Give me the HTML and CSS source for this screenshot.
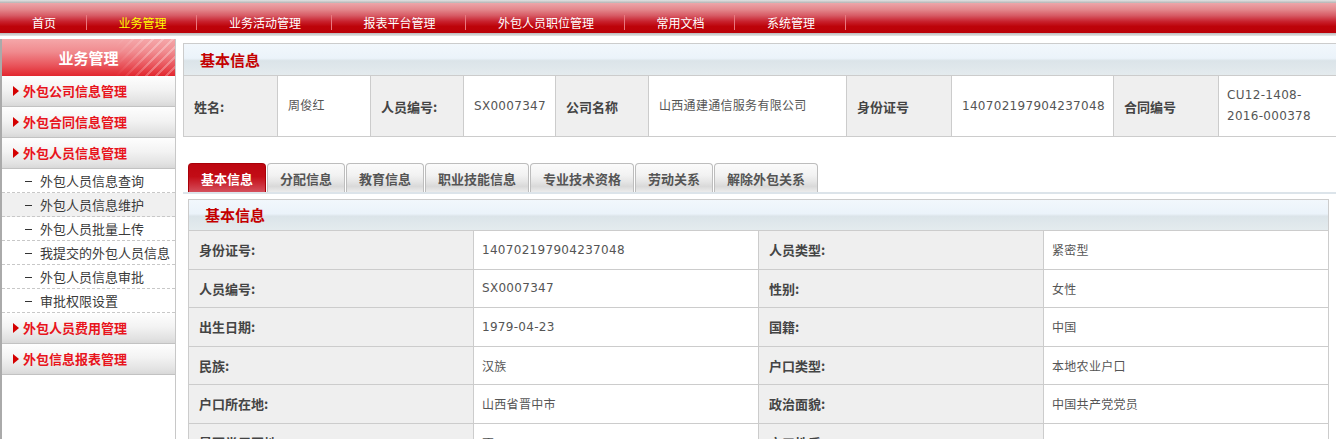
FILE: index.html
```html
<!DOCTYPE html>
<html lang="zh-CN">
<head>
<meta charset="utf-8">
<title>业务管理</title>
<link rel="stylesheet" href="styles.css">
</head>
<body>
<div class="topstrip"></div>
<nav class="nav">
  <a class="nav-item">首页</a>
  <a class="nav-item active">业务管理</a>
  <a class="nav-item">业务活动管理</a>
  <a class="nav-item">报表平台管理</a>
  <a class="nav-item">外包人员职位管理</a>
  <a class="nav-item">常用文档</a>
  <a class="nav-item">系统管理</a>
</nav>
<div class="navshadow"></div>
<div class="layout">
  <aside class="side">
    <div class="side-head">业务管理</div>
    <ul class="menu">
      <li class="menu-item">外包公司信息管理</li>
      <li class="menu-item">外包合同信息管理</li>
      <li class="menu-item">外包人员信息管理</li>
      <li class="sub-item">外包人员信息查询</li>
      <li class="sub-item current">外包人员信息维护</li>
      <li class="sub-item">外包人员批量上传</li>
      <li class="sub-item">我提交的外包人员信息</li>
      <li class="sub-item">外包人员信息审批</li>
      <li class="sub-item">审批权限设置</li>
      <li class="menu-item">外包人员费用管理</li>
      <li class="menu-item">外包信息报表管理</li>
    </ul>
  </aside>
  <main class="main">
    <section class="box box-summary">
      <div class="box-head">基本信息</div>
      <table class="summary">
        <colgroup>
          <col class="s1"><col class="s2"><col class="s3"><col class="s4"><col class="s5">
          <col class="s6"><col class="s7"><col class="s8"><col class="s9"><col class="s10">
        </colgroup>
        <tr>
          <td class="lbl">姓名:</td>
          <td class="val">周俊红</td>
          <td class="lbl">人员编号:</td>
          <td class="val">SX0007347</td>
          <td class="lbl">公司名称</td>
          <td class="val">山西通建通信服务有限公司</td>
          <td class="lbl">身份证号</td>
          <td class="val">140702197904237048</td>
          <td class="lbl">合同编号</td>
          <td class="val last">CU12-1408-2016-000378</td>
        </tr>
      </table>
    </section>

    <div class="tabs">
      <div class="tab active">基本信息</div>
      <div class="tab">分配信息</div>
      <div class="tab">教育信息</div>
      <div class="tab">职业技能信息</div>
      <div class="tab">专业技术资格</div>
      <div class="tab">劳动关系</div>
      <div class="tab">解除外包关系</div>
    </div>

    <section class="box box-detail">
      <div class="box-head">基本信息</div>
      <table class="detail">
        <tr><td class="lbl">身份证号:</td><td class="val">140702197904237048</td><td class="lbl">人员类型:</td><td class="val">紧密型</td></tr>
        <tr><td class="lbl">人员编号:</td><td class="val">SX0007347</td><td class="lbl">性别:</td><td class="val">女性</td></tr>
        <tr><td class="lbl">出生日期:</td><td class="val">1979-04-23</td><td class="lbl">国籍:</td><td class="val">中国</td></tr>
        <tr><td class="lbl">民族:</td><td class="val">汉族</td><td class="lbl">户口类型:</td><td class="val">本地农业户口</td></tr>
        <tr><td class="lbl">户口所在地:</td><td class="val">山西省晋中市</td><td class="lbl">政治面貌:</td><td class="val">中国共产党党员</td></tr>
        <tr><td class="lbl">是否常居同地:</td><td class="val">否</td><td class="lbl">户口性质:</td><td class="val"></td></tr>
      </table>
    </section>
  </main>
</div>
</body>
</html>
```
FILE: styles.css
```css
* { box-sizing: border-box; margin: 0; padding: 0; }

body {
  width: 1336px;
  height: 439px;
  overflow: hidden;
  background: #fff;
  color: #333;
  font-family: "Noto Sans CJK SC", "DejaVu Sans", sans-serif;
  font-size: 13px;
}

.topstrip {
  height: 3px;
  background: linear-gradient(#e2e2e2, #b4b4b4);
}

.nav {
  height: 30px;
  display: flex;
  background: linear-gradient(#eda6a9 0%, #e3878c 22%, #d75a64 42%, #c8202c 62%, #bd0309 78%, #bb0008 100%);
}

.nav-item {
  position: relative;
  padding: 9px 30.5px 0 32px;
  line-height: 21px;
  font-size: 12px;
  color: #fff;
  text-decoration: none;
}

.nav-item::after {
  content: "";
  position: absolute;
  right: 0;
  top: 12px;
  width: 1px;
  height: 15px;
  background: #e8787f;
}

.nav-item.active { color: #ffff00; }

.navshadow {
  height: 3px;
  background: linear-gradient(#b9b9b9, #e6e6e6);
}

.layout {
  display: flex;
  align-items: flex-start;
  margin-top: 3px;
}

.side {
  flex-shrink: 0;
  width: 176px;
  height: 400px;
  border-left: 2px solid #aaa;
  border-right: 1px solid #c8c8c8;
}

.side-head {
  position: relative;
  height: 37px;
  line-height: 37px;
  text-align: center;
  color: #fff;
  font-weight: bold;
  font-size: 15px;
  background: linear-gradient(#f5a7a9 0%, #f08a8e 35%, #e9565d 70%, #e2262e 100%);
  overflow: hidden;
}

.side-head::after {
  content: "";
  position: absolute;
  right: 0;
  top: 0;
  width: 60px;
  height: 37px;
  background: repeating-linear-gradient(135deg, rgba(255,255,255,0) 0 5px, rgba(255,255,255,0.28) 5px 7px);
  -webkit-mask-image: linear-gradient(90deg, transparent, #000 60%);
          mask-image: linear-gradient(90deg, transparent, #000 60%);
}

.menu { list-style: none; }

.menu-item {
  position: relative;
  height: 31px;
  line-height: 30px;
  padding-left: 21px;
  border-bottom: 1px solid #c2c2c2;
  background: linear-gradient(#fefefe 0%, #f3f3f3 45%, #e2e2e2 85%, #d8d8d8 100%);
  color: #e8141c;
  font-weight: bold;
  font-size: 13px;
}

.menu-item::before {
  content: "";
  position: absolute;
  left: 11px;
  top: 10px;
  border-left: 6px solid #d40000;
  border-top: 5px solid transparent;
  border-bottom: 5px solid transparent;
}

.sub-item {
  position: relative;
  height: 24px;
  line-height: 23px;
  padding-left: 38px;
  border-bottom: 1px dashed #c8c8c8;
  color: #3a3a3a;
  font-size: 13px;
}

.sub-item::before {
  content: "";
  position: absolute;
  left: 23px;
  top: 12px;
  width: 7px;
  height: 1px;
  background: #333;
}

.sub-item.current { background: #f0f0f0; }

.main {
  flex-shrink: 0;
  width: 1153px;
  margin-left: 7px;
  padding-top: 4px;
  overflow: hidden;
  height: 400px;
}

.box { background: #fff; }

.box-head {
  height: 32px;
  line-height: 31px;
  padding-left: 16px;
  border: 1px solid #ccc;
  border-bottom: none;
  color: #c40000;
  font-weight: bold;
  font-size: 15px;
  background: linear-gradient(#f2f7fc 0%, #ebf3fa 46%, #dbe4e9 54%, #e4ebee 100%);
}

.box-summary { width: 1160px; }

table {
  border-collapse: collapse;
  table-layout: fixed;
  width: 100%;
}

td {
  border: 1px solid #ccc;
  vertical-align: middle;
}

.lbl {
  background: #efefef;
  color: #444;
  font-weight: bold;
  font-size: 13px;
  padding-left: 10px;
}

.val {
  color: #555;
  font-family: "DejaVu Sans", "Noto Sans CJK SC", sans-serif;
  font-size: 12px;
  letter-spacing: 0.3px;
  padding-left: 10px;
}

.summary td { height: 61px; line-height: 21px; }
.summary .last { padding-left: 8px; padding-right: 20px; }

.s1 { width: 94px; }
.s2 { width: 93px; }
.s3 { width: 93px; }
.s4 { width: 92px; }
.s5 { width: 93px; }
.s6 { width: 198px; }
.s7 { width: 105px; }
.s8 { width: 162px; }
.s9 { width: 105px; }
.s10 { width: 125px; }

.tabs {
  display: flex;
  margin-top: 26px;
  padding-left: 5px;
  border-bottom: 2px solid #dce4ea;
}

.tab {
  height: 29px;
  line-height: 29px;
  padding: 0 12px;
  margin-right: 1px;
  border: 1px solid #bdbdbd;
  border-bottom: none;
  border-radius: 4px 4px 0 0;
  color: #555;
  font-weight: bold;
  font-size: 13px;
  background: linear-gradient(#fbfbfb 0%, #f2f2f2 40%, #e6e6e6 62%, #d9d9d9 80%, #ececec 100%);
}

.tab.active {
  color: #fff;
  border-color: #a80008;
  background: linear-gradient(#bd0610 0%, #c20c16 45%, #cc2c38 72%, #d4505c 100%);
}

.box-detail {
  width: 1141px;
  margin-left: 5px;
  margin-top: 5px;
}

.box-detail .box-head {
  height: 31px;
  line-height: 30px;
}

.detail td { height: 38.5px; }
.detail .val { padding-left: 8px; }
```
